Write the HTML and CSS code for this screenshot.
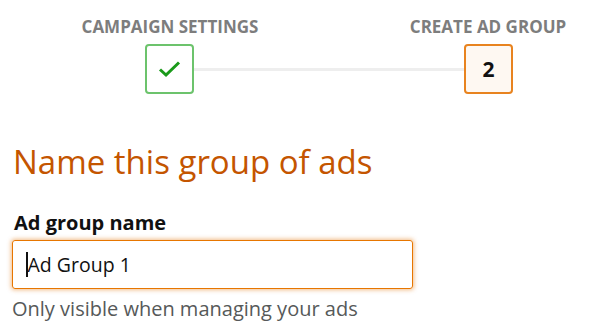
FILE: index.html
```html
<!DOCTYPE html>
<html lang="en">
<head>
	<meta charset="UTF-8">
	<title>Create ad group</title>
	<link rel="stylesheet" href="styles.css">
</head>
<body>
	<div id="wizard">
		<div class="labels">
			<span class="step-label">CAMPAIGN SETTINGS</span>
			<span class="step-label">CREATE AD GROUP</span>
		</div>
		<div class="track">
			<div class="step-box done">
				<svg width="24" height="18" viewBox="0 0 24 18"><path d="M2 9.5 L8 15 L21 2.5" fill="none" stroke="#1a9a1a" stroke-width="3"/></svg>
			</div>
			<div class="step-line"></div>
			<div class="step-box current">2</div>
		</div>
	</div>
	<div id="form">
		<h1 class="title">Name this group of ads</h1>
		<div class="field-label">Ad group name</div>
		<div class="text-input"><span class="caret"></span>Ad Group 1</div>
		<p class="hint">Only visible when managing your ads</p>
	</div>
</body>
</html>
```
FILE: styles.css
```css
* {
	margin: 0;
	padding: 0;
	box-sizing: border-box;
}
body {
	background: #fff;
	font-family: "Open Sans", "Noto Sans", sans-serif;
	color: #111;
}
#wizard {
	padding-top: 16px;
}
.labels {
	display: flex;
	padding-left: 70px;
	gap: 118px;
}
.step-label {
	width: 200px;
	text-align: center;
	font-size: 17px;
	font-weight: 700;
	line-height: 22px;
	color: #7d7d7d;
}
.track {
	display: flex;
	align-items: center;
	width: 368px;
	margin-left: 145px;
	margin-top: 6px;
}
.step-box {
	width: 49px;
	height: 50px;
	border-radius: 4px;
	display: flex;
	align-items: center;
	justify-content: center;
	flex-shrink: 0;
}
.done {
	border: 2px solid #6cc36c;
}
.current {
	border: 2px solid #e8831f;
	background: #fef8f2;
	font-size: 21px;
	font-weight: 700;
	color: #111;
}
.step-line {
	flex: 1;
	height: 3px;
	background: #eee;
}
#form {
	padding: 0 12px;
}
.title {
	margin-top: 46px;
	padding-left: 1px;
	font-size: 33px;
	font-weight: 400;
	line-height: 44px;
	color: #c45500;
}
.field-label {
	margin-top: 27px;
	font-size: 20px;
	font-weight: 700;
	line-height: 24px;
	padding-left: 2px;
}
.text-input {
	margin-top: 5px;
	width: 401px;
	height: 49px;
	border: 1px solid #e77600;
	border-radius: 3px;
	box-shadow: 0 0 4px 1px rgba(228, 121, 17, .5);
	display: flex;
	align-items: center;
	padding-left: 13px;
	font-size: 19.5px;
	color: #111;
}
.caret {
	width: 1.5px;
	height: 25px;
	background: #111;
}
.hint {
	margin-top: 8px;
	font-size: 20px;
	line-height: 24px;
	color: #565959;
}
```
